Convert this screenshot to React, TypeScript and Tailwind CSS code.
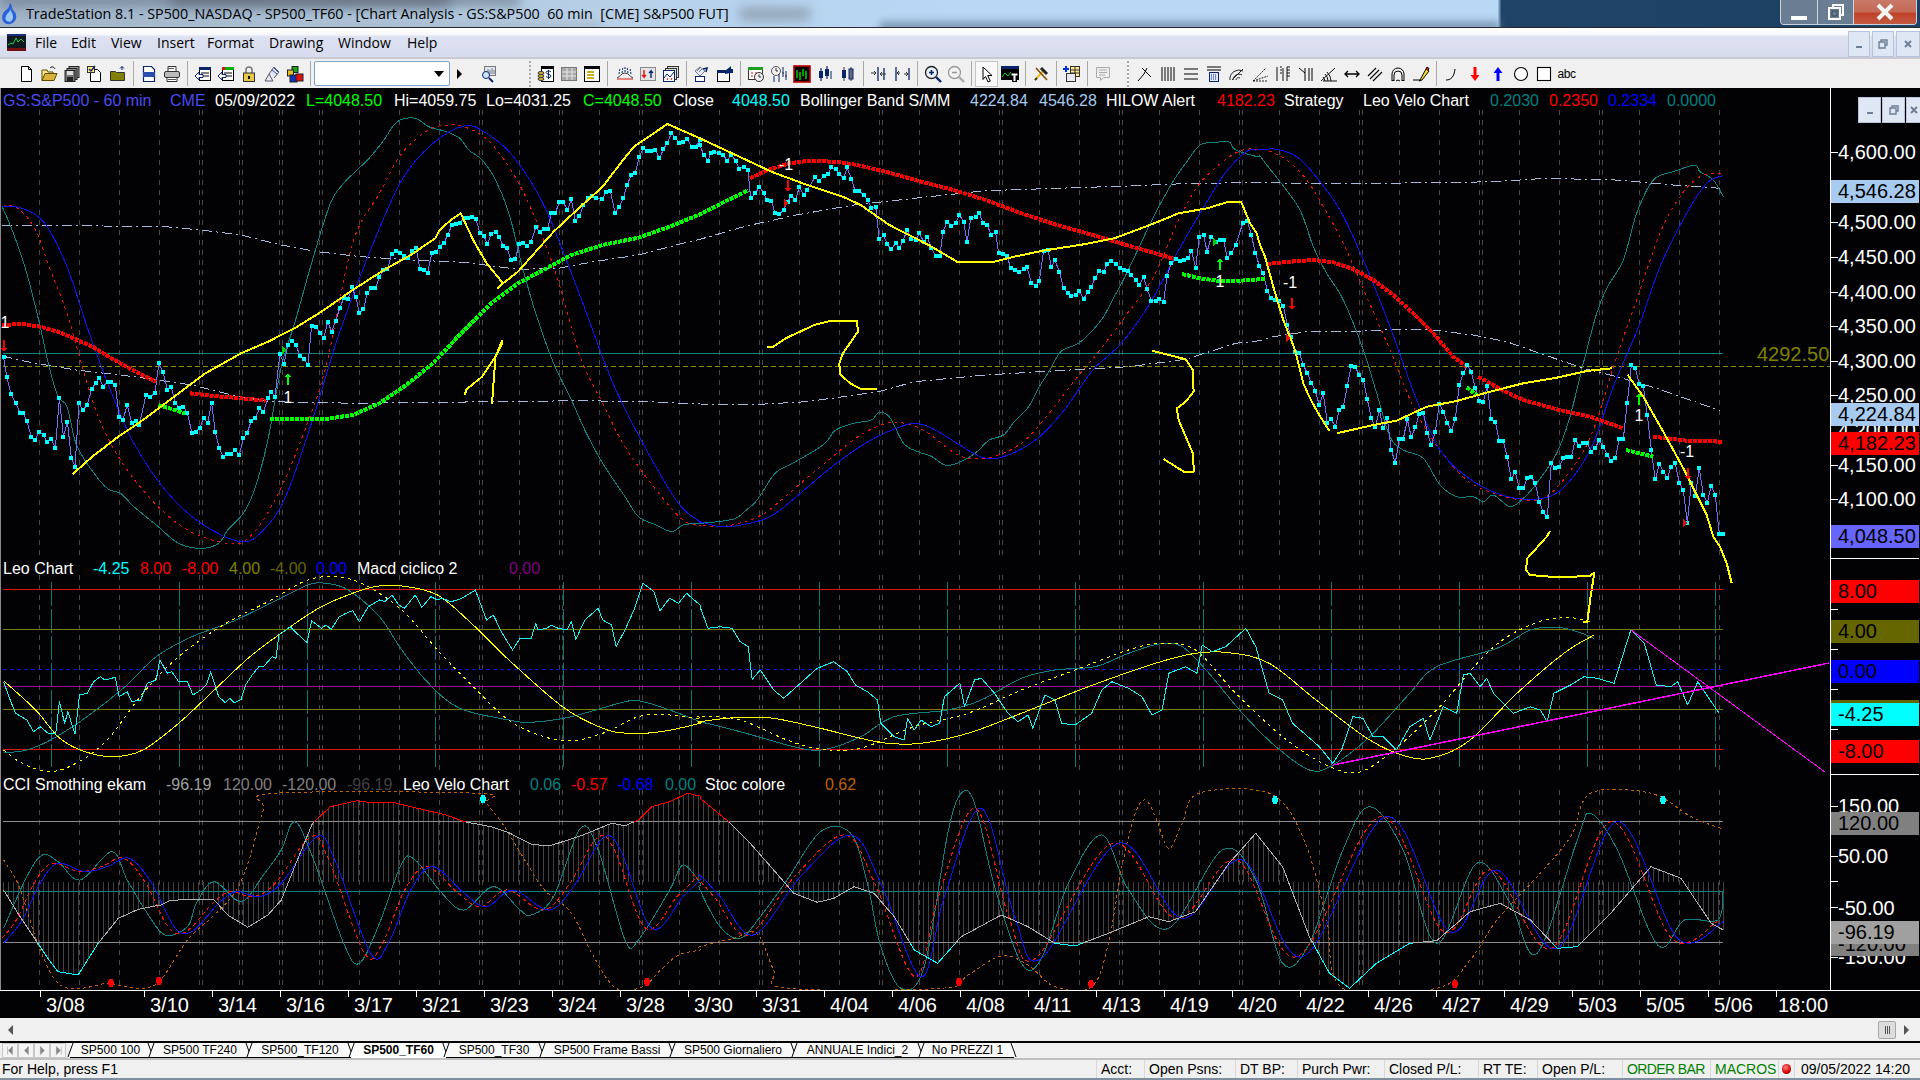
import React from "react";

type P = [number, number];
const Z = (ox: number, sx: number, oy: number) => (a: number[]): P[] => {
  const o: P[] = [];
  for (let i = 0; i < a.length; i += 2) o.push([ox + a[i] / sx, oy + a[i + 1] / 3]);
  return o;
};
const z8 = Z(0, 2.24, 100);
const z10 = Z(700, 2.8, 100);
const z11 = Z(1240, 3, 100);
const z9 = Z(0, 2.24, 550);
const z12 = Z(700, 1.4933, 550);
const join = (...parts: P[][]): P[] => {
  let out: P[] = [];
  parts.forEach((p) => {
    if (p.length === 0) return;
    out = out.filter((q) => q[0] < p[0][0]).concat(p);
  });
  return out;
};
const poly = (p: P[]) => p.map((q) => `${q[0].toFixed(1)},${q[1].toFixed(1)}`).join(" ");
const smooth = (p: P[]) => {
  let d = `M${p[0][0].toFixed(1)} ${p[0][1].toFixed(1)}`;
  for (let i = 0; i < p.length - 1; i++) {
    const a = p[Math.max(i - 1, 0)], b = p[i], c = p[i + 1], e = p[Math.min(i + 2, p.length - 1)];
    d += `C${(b[0] + (c[0] - a[0]) / 6).toFixed(1)} ${(b[1] + (c[1] - a[1]) / 6).toFixed(1)} ${(c[0] - (e[0] - b[0]) / 6).toFixed(1)} ${(c[1] - (e[1] - b[1]) / 6).toFixed(1)} ${c[0].toFixed(1)} ${c[1].toFixed(1)}`;
  }
  return d;
};
const at = (p: P[], x: number) => {
  for (let i = 0; i < p.length - 1; i++) {
    if (x >= p[i][0] && x <= p[i + 1][0]) {
      const t = (x - p[i][0]) / (p[i + 1][0] - p[i][0] || 1);
      return p[i][1] + t * (p[i + 1][1] - p[i][1]);
    }
  }
  return x < p[0][0] ? p[0][1] : p[p.length - 1][1];
};

// ---- price pane ----
const teal1 = join(
  z8([5,320,30,400,60,520,90,680,110,800,130,890,150,920,170,1030,200,1100,240,1165,270,1180,300,1220,350,1275,400,1330,450,1345,490,1330,510,1290,545,1240,570,1170,600,1020,630,800,660,670,700,480,740,310,770,250,800,210,830,170,860,120,890,65,930,55,960,80,1000,95,1030,115,1050,150,1080,180,1110,240,1140,340,1170,500,1200,640,1240,790,1280,900,1310,990,1350,1090,1400,1190,1430,1250,1470,1275,1505,1295,1530,1275,1568,1270]),
  z10([0,1270,50,1265,100,1255,130,1230,160,1200,210,1120,250,1095,300,1065,350,1030,380,990,430,970,480,960,500,938,530,950,570,1030,610,1055,650,1070,685,1095,720,1090,770,1060,810,1020,850,1005,880,965,920,920,950,860,980,810,1010,755,1060,730,1100,690,1130,650,1160,590,1190,530,1230,440,1270,350,1300,290,1330,235,1360,190,1400,135,1440,128,1480,125,1500,150,1560,170]),
  z11([60,168,80,195,120,245,180,330,220,440,260,520,310,600,370,750,410,880,450,1010,490,1050,550,1075,600,1155,650,1190,700,1190,730,1205,760,1185,810,1220,850,1195,890,1150,950,1060,990,950,1030,790,1070,640,1100,565,1150,480,1190,340,1240,240,1300,215,1365,195,1380,215,1420,240,1450,290])
);
const red1 = join(
  z8([5,318,40,325,80,390,110,500,150,640,180,780,220,950,270,1080,340,1200,420,1290,510,1330,560,1310,620,1190,680,1000,730,800,790,430,850,280,900,160,960,90,1000,76,1040,80,1100,130,1170,270,1240,500,1300,770,1350,910,1400,1040,1470,1170,1530,1260,1568,1275]),
  z10([0,1275,50,1280,110,1270,180,1240,260,1170,360,1080,450,1005,530,968,590,975,640,1000,700,1050,750,1075,820,1070,900,1030,970,950,1050,840,1120,750,1190,650,1270,530,1340,360,1400,250,1470,180,1520,150]),
  z11([60,148,80,150,140,180,200,240,250,320,310,430,380,590,450,750,520,920,600,1050,680,1140,760,1180,850,1200,920,1190,1000,1100,1060,990,1130,770,1190,600,1260,400,1320,290,1380,230,1445,220])
);
const blue1 = join(
  z8([5,320,50,325,100,370,150,500,200,700,250,880,300,1030,370,1170,450,1270,540,1325,590,1290,640,1190,700,960,760,700,830,450,900,240,970,130,1040,78,1090,100,1150,170,1220,320,1300,590,1370,840,1440,1030,1520,1210,1568,1265]),
  z10([0,1265,60,1280,130,1272,200,1248,270,1190,370,1100,470,1025,550,985,600,970,650,985,720,1030,790,1072,850,1070,940,1020,1020,930,1100,810,1180,730,1260,610,1330,470,1400,340,1470,220,1530,155]),
  z11([50,150,110,148,170,170,220,220,300,330,370,480,450,680,530,900,600,1050,680,1130,770,1180,860,1198,940,1185,1000,1130,1060,1030,1120,860,1200,670,1260,500,1340,340,1400,250,1448,227])
);
const bandUp = join(
  z8([5,375,100,375,230,378,370,380,450,390,540,405,630,435,710,455,810,470,920,480,1040,487,1160,508,1250,505,1330,485,1430,465,1530,430,1568,418]),
  z10([0,418,130,378,270,345,430,315,600,295,800,272,1000,265,1200,258,1380,250,1568,245]),
  z11([60,248,200,250,400,250,600,248,760,245,900,236,1100,238,1200,246,1300,255,1440,265])
);
const bandLo = join(
  z8([5,768,60,785,170,810,300,830,430,855,520,885,600,905,800,910,1100,905,1300,902,1450,905,1568,912]),
  z10([0,912,130,915,300,905,500,875,600,845,800,825,1000,812,1200,800,1360,778,1500,730]),
  z11([60,722,100,710,200,695,340,695,460,688,560,688,700,705,800,725,900,760,1030,805,1130,830,1250,865,1350,900,1440,932])
);
const close = join(
  z8([8,772,15,830,25,883,35,910,45,938,52,940,60,962,70,1010,78,1020,88,995,98,1005,105,1025,115,1018,124,1043,133,895,142,1010,151,965,160,1075,168,1100,177,910,186,930,195,915,205,868,214,850,222,833,231,860,241,845,249,845,258,855,267,950,275,960,285,915,295,968,304,962,312,975,327,885,337,890,347,880,356,790,365,815,375,870,384,862,393,910,402,925,411,920,420,940,430,1000,438,995,447,985,456,955,465,970,474,908,482,995,491,1045,500,1070,509,1062,518,1062,527,1050,536,1065,545,1015,554,998,563,962,572,955,581,925,590,935,600,895,608,875,616,890,627,762,636,792,645,735,654,722,663,735,672,768,681,778,690,795,698,678,707,680,716,698,725,715,734,665,743,695,752,662,761,625,770,595,779,598,788,562,797,590,805,640,814,628,823,578,832,565,841,565,850,530,859,510,868,508,877,463,886,453,895,458,905,468,914,475,923,452,932,445,941,508,950,510,958,518,967,460,976,455,985,440,994,430,1003,405,1012,375,1021,372,1030,370,1039,355,1048,355,1057,350,1066,358,1075,398,1084,408,1092,432,1100,402,1110,395,1118,410,1127,438,1136,445,1145,480,1154,478,1163,433,1172,430,1181,438,1190,425,1200,382,1209,395,1218,388,1227,386,1235,340,1244,338,1253,307,1262,307,1271,330,1280,298,1289,362,1298,347,1307,315,1316,293,1325,288,1334,293,1349,297,1358,276,1367,272,1378,340,1387,320,1396,295,1405,255,1414,226,1423,218,1432,170,1441,145,1450,152,1459,152,1468,150,1477,175,1486,148,1495,128,1504,100,1513,115,1522,130,1531,125,1540,118,1549,142,1558,142,1567,120]),
  z10([0,135,10,165,22,182,30,160,40,155,52,160,65,165,76,182,88,165,100,182,110,207,122,200,134,210,142,295,155,280,166,260,178,278,188,300,200,302,210,340,222,343,234,330,245,305,256,288,267,300,278,262,290,285,300,270,322,232,334,242,346,228,358,222,368,202,380,208,390,222,402,235,412,202,424,238,434,272,446,272,458,285,470,300,480,325,492,320,502,418,514,406,524,432,536,448,548,430,558,445,568,423,580,390,592,418,604,420,614,400,626,425,636,410,648,445,660,467,672,467,680,395,692,365,704,378,716,370,726,345,738,365,748,425,758,355,772,350,782,340,792,368,804,375,816,405,828,397,836,460,848,462,860,468,870,505,882,510,894,515,906,508,916,502,928,550,940,558,950,542,962,452,974,450,984,500,994,480,1006,515,1018,565,1030,578,1040,588,1052,585,1062,573,1074,597,1086,575,1096,560,1106,535,1118,513,1130,515,1140,493,1152,482,1164,492,1176,505,1186,510,1198,512,1208,525,1220,540,1230,555,1242,530,1252,568,1264,602,1276,603,1286,597,1298,605,1308,528,1320,490,1332,478,1344,482,1356,480,1366,475,1376,452,1388,503,1398,410,1410,405,1420,455,1432,410,1444,425,1456,420,1466,420,1476,473,1488,460,1500,435]),
  z11([8,370,22,362,34,405,46,458,58,497,70,520,82,572,94,595,106,600,118,602,130,618,142,675,154,712,166,756,178,758,190,795,202,820,214,848,226,873,238,915,250,880,262,968,274,958,286,980,298,930,310,920,322,858,334,797,346,802,358,825,370,840,382,897,394,955,406,982,418,930,430,985,442,955,454,1050,466,1088,478,1018,490,1017,502,958,514,1012,526,982,538,942,550,938,562,998,574,1035,586,995,598,912,610,935,622,968,634,992,646,958,658,856,670,820,682,796,694,815,706,865,718,903,730,905,742,857,754,958,766,965,778,1022,790,1023,802,1072,814,1137,826,1115,838,1165,850,1163,862,1135,874,1130,886,1150,898,1205,910,1237,922,1252,934,1088,946,1105,958,1102,970,1073,982,1070,994,1070,1006,1020,1018,1037,1030,1030,1042,1030,1054,1055,1066,1043,1078,1020,1090,1040,1102,1065,1114,1082,1126,1075,1138,1017,1150,1017,1162,908,1174,795,1186,803,1198,852,1210,857,1222,945,1234,1050,1246,1138,1258,1092,1270,1115,1282,1133,1294,1100,1306,1090,1318,1148,1330,1170,1342,1268,1354,1150,1366,1187,1378,1105,1390,1185,1402,1208,1414,1157,1426,1185,1438,1303,1450,1303])
);
const reds = [
  z8([5,675,50,672,90,680,130,695,170,718,210,742,250,775,290,805,320,825,350,845]),
  z8([425,880,480,888,540,895,595,902]),
  z10([140,235,190,210,250,190,300,183,380,185,440,195,520,215,620,245,720,273,800,300,900,340,1000,375,1100,405,1200,437,1330,477]),
  z11([82,492,150,485,220,480,280,487,340,508,400,540,460,585,520,640,580,700,640,770,680,800]),
  z11([715,830,790,872,850,900,950,928,1050,950,1150,985]),
  z11([1240,1010,1340,1022,1450,1025]),
];
const greens = [
  z8([355,915,415,940]),
  join(z8([605,957,730,957,790,945,850,910,910,855,970,790,1040,690,1100,610,1160,550,1210,515,1280,465,1350,435,1430,413,1500,380,1568,343]), z10([0,343,60,310,135,270])),
  join(z10([1350,522,1400,535,1450,542,1500,543]), z11([30,540,75,537])),
  z11([680,862,710,885]),
  z11([1158,1050,1240,1070]),
];
const yellows = [
  z8([163,1122,205,1072,260,1015,320,960,390,890,460,820,540,760,600,725,660,685,720,635,790,570,860,510,920,465,975,415,985,390,1010,360,1032,340,1060,420,1090,490,1127,550,1115,565,1127,550,1160,515,1240,395,1300,320,1350,260,1390,190,1420,140,1495,72,1568,115])
    .concat(z10([100,165,200,215,300,255,400,290,450,315,530,375,640,435,720,485,825,485,880,470,960,452,1080,432,1160,415,1260,375,1340,340,1420,325,1480,305,1515,305,1540,370]))
    .concat(z11([50,400,60,435,75,470,100,560,130,660,165,750,180,810,190,850,210,895,235,940,268,993])),
  z11([290,1000,400,975,470,962,560,920,650,903,750,875,850,850,950,833,1040,813,1115,805]),
  z11([1163,825,1210,890,1270,995,1330,1105,1400,1245,1420,1310,1440,1340,1460,1390,1475,1450]),
  z8([1041,885,1045,868,1080,830,1110,770,1125,722,1125,730,1110,770,1102,912]),
  z10([187,741,205,740,240,715,320,675,360,664,440,663,442,695,400,760,390,790,392,822,420,850,450,867,495,867]),
  z10([1265,752,1360,778,1380,810,1382,875,1360,905,1335,925,1340,960,1380,1060,1383,1115,1355,1115,1298,1077]),
  z11([930,1293,920,1310,862,1375,858,1410,870,1425,950,1432,1050,1428,1062,1418]).concat(z12([1335,75,1330,140,1325,215,1318,215])),
];

// ---- macd pane ----
const leo = join(
  z9([8,395,20,440,35,490,60,510,75,545,90,530,110,552,125,550,133,455,145,520,152,485,168,553,178,435,195,430,210,395,225,380,235,390,258,382,267,440,285,425,295,455,315,450,330,400,350,390,358,330,375,370,385,365,400,395,420,395,432,435,450,420,462,405,472,365,490,440,505,458,515,445,525,458,540,448,550,405,565,375,580,350,590,350,610,320,618,325,625,255,650,230,665,250,688,278,698,212,720,235,730,225,742,238,760,200,775,190,790,182,805,215,825,170,838,160,850,150,862,155,878,135,893,165,906,175,930,135,945,172,965,140,980,150,990,145,1010,155,1030,148,1040,140,1065,120,1080,175,1090,210,1105,195,1125,250,1148,300,1165,265,1190,265,1200,220,1205,240,1225,235,1235,225,1250,235,1270,240,1280,215,1290,268,1310,210,1340,175,1350,210,1370,225,1380,290,1400,240,1420,180,1440,100,1465,125,1478,183,1500,145,1520,160,1538,130,1568,165]),
  z12([0,170,12,235,30,230,48,235,60,275,72,290,78,388,90,360,110,420,125,445,150,400,175,355,200,335,220,365,232,405,250,425,265,450,270,520,290,560,305,570,310,505,320,540,330,510,345,530,358,520,365,440,388,400,395,470,410,390,420,385,440,430,460,490,475,515,490,495,497,535,515,435,530,450,540,520,560,525,585,490,600,420,615,395,640,415,660,440,675,495,690,480,700,370,725,350,742,370,750,285,765,305,785,290,815,235,830,290,850,430,870,450,885,520,925,590,945,640,958,600,975,500,990,505,1005,560,1020,560,1040,600,1060,530,1080,505,1090,570,1110,470,1130,490,1140,375,1150,370,1165,410,1175,385,1185,430,1215,490,1240,470,1255,480,1265,515,1275,430,1300,405,1320,380,1340,385,1365,400,1390,240,1410,280,1428,405,1450,410,1460,395,1475,465,1490,395,1510,455,1522,490])
);
const teal2 = join(
  z9([8,608,60,600,120,565,200,495,280,410,350,320,430,260,520,215,620,150,690,105,730,100,780,120,850,200,900,300,960,400,1030,475,1140,510,1190,517,1280,500,1400,455,1440,455,1500,480,1568,515]),
  z12([0,515,60,545,150,595,190,597,240,560,290,500,370,480,420,450,480,385,530,360,590,350,640,310,685,282,720,290,760,370,810,490,860,590,910,660,945,645,1000,560,1060,430,1100,350,1190,295,1240,240,1280,232,1310,245,1335,265])
);
const yel2 = join(
  z9([8,392,80,480,130,560,180,600,250,620,320,600,400,520,480,420,560,320,640,240,720,170,800,125,850,108,900,108,980,135,1060,225,1140,330,1260,470,1350,535,1410,550,1480,545,1568,520]),
  z12([0,515,60,502,110,505,180,535,240,565,280,580,330,580,400,550,480,490,580,410,680,340,740,310,790,308,850,340,920,450,1000,570,1060,622,1100,620,1150,570,1220,430,1290,310,1335,255])
);
const yelDot = join(
  z9([8,600,50,640,110,665,170,640,240,570,320,430,400,320,500,225,600,155,680,95,740,80,810,100,900,180,980,300,1060,410,1150,520,1260,572,1350,550,1430,500,1500,495,1568,505]),
  z12([0,498,60,510,130,570,180,597,240,595,320,530,400,490,480,420,560,360,640,300,690,280,740,300,800,430,870,560,930,640,980,668,1030,610,1100,480,1180,300,1240,225,1290,202,1330,215])
);

// ---- cci pane ----
const cci = join(
  z9([8,1020,40,1090,80,1170,110,1230,130,1265,175,1275,220,1180,265,1105,310,1078,360,1065,380,1052,420,1048,480,1050,510,1095,555,1132,600,1095,630,1050,660,950,700,820,740,770,800,752,830,758,880,757,920,770,1000,795,1040,815,1100,830,1140,848,1190,883,1230,888,1300,858,1370,820,1400,827,1430,810,1460,770,1500,755,1540,730,1568,738]),
  z12([0,745,40,810,75,880,110,960,140,1030,175,1057,200,1045,230,1010,260,1030,290,1100,320,1200,355,1240,390,1160,450,1095,490,1130,530,1180,560,1188,610,1150,670,1100,700,1115,740,1085,790,940,830,850,870,950,910,1160,940,1270,970,1315,1010,1240,1060,1180,1100,1172,1150,1085,1195,1060,1240,1110,1280,1195,1310,1190,1360,1090,1420,950,1465,985,1510,1120,1528,1140])
);
const stoc = join(
  z9([8,930,40,1000,60,1080,90,1200,130,1300,180,1315,240,1300,280,1310,320,1315,360,1290,420,1170,480,1095,530,1020,560,920,590,780,615,730,1070,730,1090,760,1130,830,1180,940,1220,1020,1280,1090,1330,1220,1380,1315,1440,1310,1480,1260,1520,1215,1568,1200]),
  z12([0,1190,50,1165,85,1150,110,1260,130,1315,360,1315,400,1275,450,1218,490,1245,530,1310,585,1310,610,1180,630,950,650,790,665,750,680,800,700,895,720,820,745,730,850,730,900,860,935,1100,960,1315,1100,1315,1150,1230,1190,1110,1250,980,1300,860,1330,730,1420,730,1480,800,1528,838])
);
const teal3 = join(
  z9([8,1135,60,980,95,915,130,935,180,990,250,905,285,990,330,1090,370,1155,420,1130,440,1060,480,995,540,1055,590,975,630,900,660,815,700,920,770,1180,805,1240,850,1120,900,940,930,930,990,1030,1040,1080,1105,1010,1165,1080,1190,1095,1240,1040,1300,835,1340,900,1400,1170,1430,1170,1500,1020,1530,945,1568,1000]),
  z12([0,1020,30,1130,60,1165,90,1100,130,990,180,845,225,850,250,1000,270,1190,300,1315,335,1250,370,850,390,730,410,760,440,1010,480,1240,510,1225,550,1000,600,855,640,1020,700,1135,780,900,830,990,870,1240,910,1180,960,900,1000,770,1050,900,1100,1180,1160,940,1210,1060,1250,1210,1310,870,1330,790,1370,900,1430,1185,1470,1110,1520,1110,1528,1020])
);
const blue3 = join(
  z9([8,1180,50,1110,90,1000,130,940,190,965,240,950,290,925,340,1000,390,1130,430,1145,490,1060,530,1025,580,1040,630,1000,710,860,750,930,830,1210,870,1180,920,1020,970,950,1040,1030,1090,1070,1150,1020,1230,1080,1290,1000,1350,865,1390,900,1460,1135,1530,1040,1568,990]),
  z12([0,975,30,1040,80,1155,150,980,225,855,270,1000,330,1280,365,1040,420,775,470,1100,510,1225,625,880,720,1105,810,930,900,1220,1025,800,1120,1145,1190,960,1280,1195,1370,815,1460,1165,1528,1115])
);

const gridXs = Array.from({ length: 43 }, (_, i) => 39 + i * 40);
const doubles = [199, 239, 279, 319, 479, 559, 639, 759, 879, 999, 1119, 1239, 1359, 1479, 1599];
const tealXs = Array.from({ length: 14 }, (_, i) => 51 + i * 128);
const bars = Array.from({ length: 345 }, (_, i) => 3 + i * 5);

type T = [string, string, number];
const legend1: T[] = [
  ["GS:S&P500 - 60 min", "#4a4af0", 3], ["CME", "#4a4af0", 170], ["05/09/2022", "#ffffff", 215], ["L=4048.50", "#00ff00", 306],
  ["Hi=4059.75", "#ffffff", 394], ["Lo=4031.25", "#ffffff", 486], ["C=4048.50", "#00ff00", 583], ["Close", "#ffffff", 673],
  ["4048.50", "#00ffff", 732], ["Bollinger Band S/MM", "#ffffff", 800], ["4224.84", "#a6caf0", 970], ["4546.28", "#a6caf0", 1039],
  ["HILOW Alert", "#ffffff", 1106], ["4182.23", "#ff0000", 1217], ["Strategy", "#ffffff", 1284], ["Leo Velo Chart", "#ffffff", 1363],
  ["0.2030", "#008080", 1490], ["0.2350", "#ff0000", 1549], ["0.2334", "#0000ff", 1608], ["0.0000", "#008080", 1667],
];
const legend2: T[] = [
  ["Leo Chart", "#ffffff", 3], ["-4.25", "#00ffff", 93], ["8.00", "#ff0000", 140], ["-8.00", "#ff0000", 182], ["4.00", "#808000", 229],
  ["-4.00", "#666600", 270], ["0.00", "#0000ff", 316], ["Macd ciclico 2", "#ffffff", 357], ["0.00", "#800080", 509],
];
const legend3: T[] = [
  ["CCI Smothing ekam", "#ffffff", 3], ["-96.19", "#a0a0a0", 166], ["120.00", "#808080", 223], ["-120.00", "#808080", 282],
  ["-96.19", "#404040", 347], ["Leo Velo Chart", "#ffffff", 403], ["0.06", "#008080", 530], ["-0.57", "#ff0000", 571],
  ["-0.68", "#0000ff", 617], ["0.00", "#008080", 665], ["Stoc colore", "#ffffff", 705], ["0.62", "#c06000", 825],
];
const marks: T[] = [["1", "#ffffff", 5], ["1", "#ffffff", 288], ["-1", "#ffffff", 786], ["1", "#ffffff", 1220], ["-1", "#ffffff", 1290], ["1", "#ffffff", 1639], ["-1", "#ffffff", 1687]];
const markY = [328, 403, 170, 287, 288, 421, 457];
const arrows: [number, number, string, number][] = [
  [288, 373, "#00ff00", -1], [4, 340, "#ff0000", 1], [788, 180, "#ff0000", 1], [1220, 258, "#00ff00", -1],
  [1292, 298, "#ff0000", 1], [1639, 393, "#00ff00", -1], [1688, 468, "#ff0000", 1],
];

function Chart() {
  const line = (p: P[], color: string, w = 1, dash?: string, k?: string) => (
    <polyline key={k} points={poly(p)} fill="none" stroke={color} strokeWidth={w} strokeDasharray={dash} strokeLinejoin="round" />
  );
  const curve = (p: P[], color: string, w = 1, dash?: string) => (
    <path d={smooth(p)} fill="none" stroke={color} strokeWidth={w} strokeDasharray={dash} />
  );
  const hl = (y: number, c: string, x2 = 1723, dash?: string, w = 1) => (
    <line x1={3} x2={x2} y1={y} y2={y} stroke={c} strokeWidth={w} strokeDasharray={dash} />
  );
  const grid = (x: number) => (
    <g key={x} stroke="#484848" strokeDasharray="5 5">
      <line x1={x + 0.5} x2={x + 0.5} y1={110} y2={555} />
      <line x1={x + 0.5} x2={x + 0.5} y1={575} y2={770} />
      <line x1={x + 0.5} x2={x + 0.5} y1={790} y2={987} />
    </g>
  );
  return (
    <svg viewBox="0 88 1830 902" shapeRendering="crispEdges" className="block w-[1830px] h-[902px] shrink-0 font-['Liberation_Sans',Arial,sans-serif]">
      <defs>
        <clipPath id="hi"><rect x="0" y="700" width="1830" height="122" /></clipPath>
        <clipPath id="lo"><rect x="0" y="943" width="1830" height="60" /></clipPath>
      </defs>
      <line x1="0.5" x2="0.5" y1="88" y2="990" stroke="#8a8a8a" />
      {gridXs.map((x) => grid(x))}
      {doubles.map((x) => grid(x + 3))}
      {tealXs.map((x) => (
        <line key={x} x1={x + 0.5} x2={x + 0.5} y1={582} y2={767} stroke="#0f7878" strokeDasharray="24 3" />
      ))}

      {/* price pane */}
      {hl(353.5, "#108080")}
      {hl(366.5, "#8c8c00", 1830, "5 3")}
      {line(bandUp, "#a6bcdc", 1, "10 4 2 4")}
      {line(bandLo, "#a6bcdc", 1, "10 4 2 4")}
      {curve(teal1, "#0f8080")}
      {curve(red1, "#f01010", 1, "3 4")}
      {curve(blue1, "#1010f0")}
      {line(close, "#7070f0")}
      {reds.map((p, i) => line(p, "#ff0000", 4, "4 1", "r" + i))}
      {greens.map((p, i) => line(p, "#00ff00", 4, "4 1", "g" + i))}
      <path d={close.map((q) => `M${Math.round(q[0] - 2)} ${Math.round(q[1] - 2)}h4v4h-4z`).join("")} fill="#00ffff" />
      {yellows.map((p, i) => line(p, "#ffff00", 2, undefined, "y" + i))}
      {arrows.map(([x, y, c, d], i) => (
        <path
          key={i}
          d={d > 0 ? `M${x - 1} ${y}h2v8h2l-3 4l-3-4h2z` : `M${x - 1} ${y + 12}h2v-8h2l-3-4l-3 4h2z`}
          fill={c}
        />
      ))}
      <path d="M282 346l5 4l-5 4zM1213 238l5 4l-5 4z" fill="#00d000" />
      <path d="M784 199l5 4l-5 4zM1286 334l5 4l-5 4zM1683 519l5 4l-5 4z" fill="#e01010" />
      {marks.map(([s, c, x], i) => (
        <text key={i} x={x} y={markY[i]} fill={c} fontSize={16} textAnchor="middle">{s}</text>
      ))}
      <text x={1757} y={361} fill="#808000" fontSize={20}>4292.50</text>

      {/* macd pane */}
      {hl(589.5, "#e01010")}
      {hl(629.5, "#7a7a00")}
      {hl(669.5, "#1414d8", 1723, "4 3")}
      {hl(686.5, "#a000a0")}
      {hl(709.5, "#7a7a00")}
      {hl(749.5, "#e01010")}
      {curve(teal2, "#0f8080")}
      {curve(yelDot, "#ffff00", 1, "3 4")}
      {curve(yel2, "#ffff00")}
      {line(leo, "#19f0f0")}
      <line x1="1333" y1="765" x2="1829" y2="663" stroke="#ff00ff" strokeWidth="1.5" />
      <line x1="1631" y1="630" x2="1825" y2="772" stroke="#ff00ff" />

      {/* cci pane */}
      {bars.map((x) => (
        <line key={x} x1={x + 0.5} x2={x + 0.5} y1={881.5} y2={at(cci, x)} stroke="#424242" />
      ))}
      {hl(821.5, "#8c8c8c")}
      {hl(942.5, "#8c8c8c")}
      {hl(891.5, "#108080")}
      {curve(teal3, "#0f8080")}
      {curve(stoc, "#c06000", 1, "3 3")}
      <g transform="translate(-6 0)">{curve(blue3, "#ff1010", 1, "4 3")}</g>
      {curve(blue3, "#1010f0")}
      {line(cci, "#b0b0b0")}
      <g clipPath="url(#hi)">{line(cci, "#ff0000", 1)}</g>
      <g clipPath="url(#lo)">{line(cci, "#00ffff", 1)}</g>
      <g fill="#ff0000">
        {[[111, 983], [159, 981], [647, 982], [959, 982], [1091, 984], [1455, 984]].map(([x, y]) => (
          <ellipse key={x} cx={x} cy={y} rx={3} ry={4} />
        ))}
      </g>
      <g fill="#00ffff">
        {[[483, 799], [1275, 800], [1663, 800]].map(([x, y]) => (
          <ellipse key={x} cx={x} cy={y} rx={3} ry={4} />
        ))}
      </g>

      {[legend1.map((t) => [...t, 106]), legend2.map((t) => [...t, 574]), legend3.map((t) => [...t, 790])].map((row, r) =>
        row.map((t, i) => (
          <text key={r + "-" + i} x={t[2] as number} y={t[3] as number} fill={t[1] as string} fontSize={16}>
            {t[0]}
          </text>
        ))
      )}
    </svg>
  );
}

const axisLabels: { y: number; t: string; bg?: string }[] = [
  { y: 152, t: "4,600.00" }, { y: 191, t: "4,546.28", bg: "#a6caf0" }, { y: 222, t: "4,500.00" }, { y: 257, t: "4,450.00" },
  { y: 292, t: "4,400.00" }, { y: 326, t: "4,350.00" }, { y: 361, t: "4,300.00" }, { y: 395, t: "4,250.00" },
  { y: 430, t: "4,200.00" }, { y: 414, t: "4,224.84", bg: "#a6caf0" }, { y: 443, t: "4,182.23", bg: "#ff0000" },
  { y: 465, t: "4,150.00" }, { y: 499, t: "4,100.00" }, { y: 536, t: "4,048.50", bg: "#6666ff" },
  { y: 591, t: "8.00", bg: "#ff0000" }, { y: 631, t: "4.00", bg: "#666600" }, { y: 671, t: "0.00", bg: "#0000ff" },
  { y: 711.5, t: "", bg: "#666600" }, { y: 714, t: "-4.25", bg: "#00ffff" }, { y: 751, t: "-8.00", bg: "#ff0000" },
  { y: 806, t: "150.00" }, { y: 823, t: "120.00", bg: "#808080" }, { y: 856, t: "50.00" }, { y: 908, t: "-50.00" },
  { y: 957, t: "-150.00" }, { y: 944, t: "-120.00", bg: "#808080" }, { y: 932, t: "-96.19", bg: "#a0a0a0" },
];
const axisTicks = [152, 222, 257, 292, 326, 361, 395, 465, 499, 609, 649, 689, 729, 806, 856, 881, 907, 957];

function Axis() {
  return (
    <div className="relative w-[90px] h-[902px] shrink-0 border-l border-white bg-[#020204] overflow-hidden font-['Liberation_Sans',Arial,sans-serif]">
      {axisTicks.map((y) => (
        <div key={y} className="absolute left-0 w-[7px] h-px bg-white" style={{ top: y - 88 }} />
      ))}
      {axisLabels.map((l, i) => (
        <div
          key={i}
          className={`absolute left-0 h-[23px] w-[88px] pl-[7px] text-[20px] leading-[23px] ${l.bg ? "text-black" : "text-white"}`}
          style={{ top: l.y - 88 - 11.5, background: l.bg }}
        >
          {l.t}
        </div>
      ))}
      <div className="absolute left-0 top-[470px] w-[88px] h-px bg-white" />
      <div className="absolute left-0 top-[686px] w-[88px] h-px bg-white" />
      <div className="absolute left-[27px] top-[9px] flex gap-px">
        <WinBtn kind="min" w="w-[23px]" />
        <WinBtn kind="max" w="w-[23px]" />
        <WinBtn kind="close" w="w-[15px]" />
      </div>
    </div>
  );
}

function WinBtn({ kind, w }: { kind: string; w: string }) {
  return (
    <div className={`${w} h-[26px] border border-[#b4c4da] bg-[#dfe7f5] flex items-center justify-center overflow-hidden`}>
      <svg viewBox="0 0 12 12" className="w-[12px] h-[12px] shrink-0" fill="none" stroke="#6f7f95" strokeWidth="1.4">
        {kind === "min" && <path d="M3 9h6" strokeWidth="2" />}
        {kind === "max" && <path d="M4 4V2h6v5H8M2 4h6v6H2z" />}
        {kind === "close" && <path d="M3 3l6 6M9 3l-6 6" strokeWidth="2" />}
      </svg>
    </div>
  );
}

// ---- toolbar icons ----
const Ic = ({ children }: { children: React.ReactNode }) => (
  <div className="w-[23px] h-[24px] flex items-center justify-center shrink-0">
    <svg viewBox="0 0 18 18" className="w-[18px] h-[18px]" fill="none" stroke="#000" strokeWidth="1">
      {children}
    </svg>
  </div>
);
const Sep = () => (
  <div className="w-[8px] flex justify-center shrink-0">
    <div className="w-px h-[25px] bg-[#a8a8a8]" />
  </div>
);
const Grip = ({ cls }: { cls: string }) => (
  <div className={`w-[8px] h-[26px] shrink-0 flex justify-center ${cls}`}>
    <div className="w-[2px] h-full border-l-2 border-dotted border-[#a8a8a8]" />
  </div>
);
const Lines = ({ y, w = 14 }: { y: number[]; w?: number }) => (
  <path d={y.map((v) => `M2 ${v}h${w}`).join("")} stroke="#000" />
);
const Win = ({ top = "#0a246a" }: { top?: string }) => (
  <>
    <rect x="5.5" y="2.5" width="11" height="13" fill="#fff" stroke="#000" />
    <rect x="5" y="2" width="12" height="3" fill={top} stroke="none" />
    <path d="M7 8h8M7 11h8" stroke="#000" />
    <path d="M1 11l4-4v2.5h4v3H5V15z" fill="#fff" stroke="#0a246a" />
  </>
);

function Toolbar() {
  return (
    <div className="h-[31px] bg-[#f0f0f0] flex items-center pl-[14px] border-t-2 border-[#c9c9cf] shrink-0">
      <Ic><path d="M4.5 1.5h7l3 3v12h-10z" fill="#fff" /><path d="M11.5 1.5v3h3" /></Ic>
      <Ic><path d="M2 15.5V5h5l1 2h5v2" fill="#ffe88c" stroke="#5c4a00" /><path d="M2 15.5l3-7h12l-3 7z" fill="#d9b23a" stroke="#5c4a00" /><path d="M10 3c2-2 4-1 5 1" stroke="#000" /></Ic>
      <Ic><rect x="6" y="1.5" width="10" height="11" fill="#999" stroke="#222" /><rect x="4" y="3.5" width="10" height="11" fill="#888" stroke="#222" /><rect x="2" y="5.5" width="10" height="11" fill="#777" stroke="#222" /><rect x="4" y="6" width="6" height="4" fill="#ddd" stroke="none" /><rect x="4" y="12" width="6" height="4" fill="#222" stroke="none" /></Ic>
      <Ic><path d="M4.5 4.5h7l3 3v9h-10z" fill="#fff" /><rect x="1.5" y="1.5" width="7" height="6" fill="#ffe88c" stroke="#333" /><path d="M3 4l2 2 4-5" stroke="#0a246a" strokeWidth="1.4" /></Ic>
      <Ic><path d="M1.5 15.5V6.5h5l1 1h8v8z" fill="#808000" stroke="#333" /><path d="M13 5V1.5M13 1.5l-2 2M13 1.5l2 2" stroke="#0a246a" /></Ic>
      <Sep />
      <Ic><path d="M3.5 1.5h8l3 3v12h-11z" fill="#fff" stroke="#0a246a" strokeWidth="1.2" /><rect x="3" y="7" width="12" height="5" fill="#2a4fb0" stroke="none" /></Ic>
      <Ic><path d="M5 6V1.5h8V6" fill="#fff" stroke="#333" /><rect x="1.5" y="6.5" width="15" height="6" rx="1.5" fill="#bbb" stroke="#333" /><path d="M4 12.5h10v4H4z" fill="#fff" stroke="#333" /><path d="M5 3.5h6M5 14.5h8" stroke="#555" /></Ic>
      <Sep />
      <Ic><Win /></Ic>
      <Ic><Win top="#00b000" /><rect x="5" y="2" width="3" height="3" fill="#e01010" stroke="none" /></Ic>
      <Ic><path d="M6 8V5a3 3 0 0 1 6 0v3" stroke="#777" strokeWidth="1.5" /><rect x="3.5" y="8" width="11" height="8.5" fill="#e6c84a" stroke="#333" /><path d="M9 11v3" stroke="#000" strokeWidth="2" /></Ic>
      <Ic><path d="M2 16l4-7 4 7zM6 9l5-7 5 5-5 6" fill="#e8e8f4" stroke="#556" /><path d="M9 5l5 4M11 3l4 4" stroke="#2a4fb0" /></Ic>
      <Ic><rect x="6" y="1.5" width="6" height="6" fill="#1aa01a" stroke="#222" /><rect x="1.5" y="5" width="6" height="6" fill="#e0c020" stroke="#222" /><rect x="4" y="10" width="7" height="7" fill="#1030c0" stroke="#222" /><rect x="10" y="9" width="7" height="7" fill="#e01010" stroke="#222" /></Ic>
      <Sep />
      <div className="w-[136px] h-[25px] bg-white border border-[#7fa4cf] rounded-[2px] flex items-center justify-end pr-[5px] shrink-0">
        <div className="w-0 h-0 border-l-[5px] border-r-[5px] border-t-[6px] border-l-transparent border-r-transparent border-t-black" />
      </div>
      <div className="w-[18px] flex justify-center shrink-0">
        <div className="w-0 h-0 border-t-[5px] border-b-[5px] border-l-[5px] border-t-transparent border-b-transparent border-l-black" />
      </div>
      <div className="ml-[8px]">
        <Ic><rect x="5.5" y="1.5" width="11" height="9" fill="#dfe6f0" stroke="#777" /><path d="M7 6v3M9 4v5M11 5v4M13 3v6M15 5v4" stroke="#778" /><circle cx="7" cy="10" r="3.5" fill="#cfe4ff" stroke="#0a246a" /><path d="M10 13l4 4" stroke="#0a246a" strokeWidth="2" /></Ic>
      </div>
      <Grip cls="ml-[27px]" />
      <Ic><rect x="4.5" y="1.5" width="12" height="15" fill="#fff" /><rect x="4" y="1" width="13" height="3" fill="#000" stroke="none" /><path d="M14 7c-1-1.500-5-1.500-5 .5s5 1.500 5 3.500-4 2-5 .5M11.500 5v9" stroke="#0a246a" /><ellipse cx="4" cy="8" rx="3" ry="1.5" fill="#d9b23a" stroke="#333" /><ellipse cx="4" cy="11" rx="3" ry="1.5" fill="#d9b23a" stroke="#333" /><ellipse cx="4" cy="14" rx="3" ry="1.5" fill="#d9b23a" stroke="#333" /></Ic>
      <Ic><rect x="1.5" y="2.5" width="15" height="13" fill="#a8a8a8" stroke="#777" /><path d="M2 7h14M2 11h14M7 3v12M12 3v12" stroke="#e8e8e8" /></Ic>
      <Ic><rect x="1.5" y="1.5" width="15" height="15" fill="#fff" /><rect x="1" y="1" width="16" height="3" fill="#000" stroke="none" /><rect x="4" y="6" width="7" height="2" fill="#c8b020" stroke="none" /><rect x="4" y="9" width="7" height="2" fill="#c8b020" stroke="none" /><rect x="4" y="12" width="7" height="2" fill="#c8b020" stroke="none" /></Ic>
      <Sep />
      <div className="ml-[2px]" />
      <Ic><path d="M1 13c3-1 4-5 8-5s5 4 8 5" stroke="#333" /><path d="M3 9l1-6M6 8l1-6M9 7V2M12 8l-1-6M15 9l-1-6" stroke="#0a246a" strokeDasharray="2 1" /><path d="M1 14h16" stroke="#e01010" /></Ic>
      <Ic><rect x="1.5" y="2.5" width="15" height="13" fill="#e4e4e4" stroke="#888" /><path d="M5 5v7l-2-2M5 12l2-2" stroke="#e01010" strokeWidth="1.4" /><path d="M12 13V6l-2 2M12 6l2 2" stroke="#0a246a" strokeWidth="1.4" /></Ic>
      <Ic><rect x="5.5" y="1.5" width="11" height="11" fill="#ddd" stroke="#333" /><rect x="3.5" y="3.5" width="11" height="11" fill="#ddd" stroke="#333" /><rect x="1.5" y="5.5" width="11" height="11" fill="#fff" stroke="#0a246a" /><path d="M2 13l3-4 3 3 4-5" stroke="#0a246a" /><path d="M5 15l1-2M9 15l1-2" stroke="#e01010" /></Ic>
      <Sep />
      <Ic><path d="M2 6l5-4 5 4-5 5z" fill="#e4e8f4" stroke="#778" /><path d="M4 6l3-3M6 7l3-3" stroke="#778" /><path d="M10 4l4-1-1 4" stroke="#0a246a" strokeWidth="1.6" /><rect x="2.5" y="11.5" width="9" height="5" fill="#fff" stroke="#0a246a" /></Ic>
      <Ic><rect x="1.5" y="5.5" width="12" height="11" fill="#fff" stroke="#000" /><rect x="1" y="5" width="13" height="3" fill="#0a246a" stroke="none" /><path d="M9 6l6-5v3h2v4h-3l-5 1z" fill="#0a246a" stroke="none" /></Ic>
      <Sep />
      <Ic><rect x="1.5" y="2.5" width="14" height="12" fill="#fff" stroke="#333" /><rect x="1" y="2" width="15" height="3" fill="#1aa01a" stroke="none" /><path d="M4 8h2M8 8h2M4 11h2" stroke="#e01010" /><circle cx="12" cy="12" r="4.5" fill="#eee" stroke="#333" /><path d="M12 9.5V12h2" stroke="#333" /></Ic>
      <Ic><circle cx="6" cy="6" r="4.5" fill="#f0f0f0" stroke="#555" /><path d="M6 3v3h2" stroke="#333" /><path d="M4 11v6M9 9v8M13 2v10M16 6v9" stroke="#0a246a" /><path d="M12 8h2M15 11h2" stroke="#333" /></Ic>
      <Ic><rect x="1" y="1" width="16" height="16" fill="#000" stroke="#c00000" strokeWidth="1.6" /><path d="M4 5v8M7 7v8M10 4v7M13 6v8" stroke="#00e000" strokeWidth="1.4" /></Ic>
      <Ic><path d="M5 3v13M11 1v13" stroke="#0a246a" strokeWidth="1.2" /><rect x="3" y="6" width="4" height="7" fill="#0a246a" stroke="none" /><rect x="9" y="4" width="4" height="7" fill="#0a246a" stroke="none" /><path d="M15 14V6" stroke="#0a246a" /></Ic>
      <Ic><path d="M5 2v14M12 2v14" stroke="#333" /><rect x="3" y="5" width="4" height="8" fill="#0a246a" stroke="none" /><rect x="10" y="4" width="4" height="10" fill="#667" stroke="#0a246a" /></Ic>
      <Sep />
      <Ic><path d="M8 2v14M14 3v12" stroke="#0a246a" strokeWidth="1.3" /><path d="M1 8h5M4 6l2 2-2 2M16 9h-6M12 7l-2 2 2 2" stroke="#333" /></Ic>
      <Ic><path d="M3 2v14M16 3v12" stroke="#0a246a" strokeWidth="1.3" /><path d="M4 8h3M6 6l-2 2 2 2M15 9h-4M13 7l2 2-2 2" stroke="#333" /></Ic>
      <Sep />
      <Ic><circle cx="7.5" cy="7.5" r="6" fill="#e8f2ff" stroke="#222" strokeWidth="1.3" /><path d="M5 7.5h5M7.5 5v5" stroke="#0a246a" strokeWidth="1.6" /><path d="M12 12l5 5" stroke="#0a246a" strokeWidth="2.4" /></Ic>
      <Ic><circle cx="7.5" cy="7.5" r="6" fill="#f2f2f2" stroke="#999" strokeWidth="1.3" /><path d="M5 7.5h5" stroke="#999" strokeWidth="1.6" /><path d="M12 12l5 5" stroke="#aaa" strokeWidth="2.4" /></Ic>
      <Sep />
      <div className="w-[23px] h-[26px] bg-[#f9f9f9] border border-[#c4c4c4] flex items-center justify-center shrink-0">
        <svg viewBox="0 0 18 18" className="w-[18px] h-[18px]"><path d="M5 2l9 8.5H9.7l2.6 5.5-2.2 1-2.6-5.5L5 14.500z" fill="#fff" stroke="#000" /></svg>
      </div>
      <Ic><rect x="0" y="1" width="18" height="14" fill="#000" stroke="none" /><rect x="0" y="1" width="18" height="3" fill="#0a246a" stroke="none" /><path d="M1 12l3-4 3 3 3-4" stroke="#00e000" /><path d="M10 9h7M13.5 9v8" stroke="#000" strokeWidth="5" /><path d="M10.5 9.5h6M13.5 9.5V16" stroke="#fff" strokeWidth="2" /></Ic>
      <Sep />
      <Ic><path d="M3 15L12 5" stroke="#e8c020" strokeWidth="2" /><path d="M9 3l6 6" stroke="#222" strokeWidth="3" /><path d="M4 3l11 12" stroke="#8a4a00" strokeWidth="1.6" /><path d="M3 15l2-2" stroke="#333" strokeWidth="2" /></Ic>
      <Sep />
      <Ic><rect x="7.5" y="1.5" width="9" height="10" fill="#ffe88c" stroke="#333" /><path d="M8 5h8M8 8h8M12 2v9" stroke="#333" /><rect x="3.5" y="8.5" width="9" height="8" fill="#e8e8f4" stroke="#333" /><path d="M3 1v6M0 4h6" stroke="#0030d0" strokeWidth="2" /></Ic>
      <Sep />
      <Ic><path d="M2.5 2.5h13v10h-6l-3 3v-3h-4z" fill="#efefef" stroke="#aaa" /><path d="M5 5h8M5 7.5h8M5 10h6" stroke="#aaa" /></Ic>
      <Grip cls="ml-[10px]" />
      <div className="ml-px" />
      <Ic><path d="M2 16l6-7M8 5l7 7M6 3l5 5M11 3L8 9" stroke="#000" /></Ic>
      <Ic><path d="M3 2v14M6 2v14M9 2v14M12 2v14M15 2v14" /></Ic>
      <Ic><Lines y={[4, 9, 14]} /></Ic>
      <Ic><path d="M2 2h14M2 5h14" stroke="#000" /><rect x="4.5" y="7.5" width="9" height="9" fill="#dfe8f8" stroke="#0a246a" /><path d="M6 10h6M6 12h6M6 14h6" stroke="#0a246a" strokeDasharray="1 1" /></Ic>
      <Ic><path d="M2 15a9 9 0 0 1 13-9M5 15a6 6 0 0 1 9-5M8 15a3 3 0 0 1 4-2M4 15L15 4" stroke="#222" /></Ic>
      <Ic><path d="M2 16L15 3M2 16l15-5M2 16h15" stroke="#222" strokeDasharray="2 1" /></Ic>
      <Ic><path d="M6 2h2M6 5h2M6 8h2M3 2v14M9 3v13M13 2h3M13 5h3M13 8h3M13 11h3M13 2v14" stroke="#111" /></Ic>
      <Ic><path d="M2 3l6 5M8 3v13M12 3v13M15 3v13" stroke="#000" /></Ic>
      <Ic><path d="M1 16L15 3M3 16h14M5 16a8 8 0 0 0-2-4M8 16a10 10 0 0 0-3-7M11 16a13 13 0 0 0-4-9" stroke="#111" /></Ic>
      <Ic><path d="M2 9h14M5 6L2 9l3 3M13 6l3 3-3 3" strokeWidth="1.3" /></Ic>
      <Ic><path d="M2 11l8-8M4 14l9-9M7 16l9-9" strokeWidth="1.1" /></Ic>
      <Ic><path d="M3 16V9a6 6 0 0 1 12 0v7M5 16v-6a4 4 0 0 1 8 0v6M3 16q1.5-2 2 0M7 16q2-2 4 0M13 16q1-2 2 0" strokeWidth="1" /></Ic>
      <Ic><path d="M1 15h7" /><path d="M8 15L14 4l3 2-7 9-3 1z" fill="#ffe020" stroke="#000" /><path d="M14 4l1-2 2 1.5-1 2" fill="#e01010" stroke="#000" /></Ic>
      <Sep />
      <Ic><path d="M3 15c5 0 8-3 9-11" /></Ic>
      <Ic><path d="M7.5 2h3v8h3L9 16 4.500 10h3z" fill="#ff0000" stroke="none" /></Ic>
      <Ic><path d="M7.500 16h3V8h3L9 2 4.500 8h3z" fill="#0000ff" stroke="none" /></Ic>
      <Ic><circle cx="9" cy="9" r="6.500" fill="#fff" strokeWidth="1.1" /></Ic>
      <Ic><rect x="2.500" y="2.500" width="13" height="13" fill="#fff" strokeWidth="1.1" /></Ic>
      <div className="w-[23px] text-center text-[12px] text-black shrink-0 tracking-[-0.5px]">abc</div>
    </div>
  );
}

const tabs: [string, string][] = [
  ["SP500 100", "w-[81px]"], ["SP500 TF240", "w-[98px]"], ["SP500_TF120", "w-[102px]"], ["SP500_TF60", "w-[95px]"], ["SP500_TF30", "w-[96px]"],
  ["SP500 Frame Bassi", "w-[130px]"], ["SP500 Giornaliero", "w-[122px]"], ["ANNUALE Indici_2", "w-[127px]"], ["No PREZZI 1", "w-[93px]"],
];
const ticksLabels = ["3/10","3/14","3/16","3/17","3/21","3/23","3/24","3/28","3/30","3/31","4/04","4/06","4/08","4/11","4/13","4/19","4/20","4/22","4/26","4/27","4/29","5/03","5/05","5/06"];
const statusCells: [string, string, string][] = [
  ["Acct:", "w-[48px]", "text-black"], ["Open Psns:", "w-[91px]", "text-black"], ["DT BP:", "w-[62px]", "text-black"], ["Purch Pwr:", "w-[87px]", "text-black"],
  ["Closed P/L:", "w-[94px]", "text-black"], ["RT TE:", "w-[59px]", "text-black"], ["Open P/L:", "w-[85px]", "text-black"], ["ORDER BAR", "w-[88px] tracking-[-0.6px]", "text-[#008000]"], ["MACROS", "w-[68px]", "text-[#008000]"],
];

export default function App() {
  return (
    <div className="w-[1920px] h-[1080px] overflow-hidden flex flex-col bg-[#f0f0f0] font-['Liberation_Sans',Arial,sans-serif]">
      {/* title bar */}
      <div className="relative h-[28px] shrink-0 overflow-hidden flex items-center justify-between border-b border-[#2a2a2e] bg-[linear-gradient(90deg,#9db1c6_0,#a9c0d6_12%,#b6cfe6_30%,#b9d8f6_50%,#b9d8f6_78%,#1f4468_78.2%,#1d4062_100%)]">
        <div className="absolute left-0 top-[-8px] w-[520px] h-[14px] bg-[#6b7888] blur-[6px] opacity-70" />
        <div className="absolute left-[170px] top-[-10px] w-[280px] h-[16px] bg-[#56606e] blur-[7px] opacity-70" />
        <div className="absolute left-[740px] top-[8px] w-[70px] h-[12px] bg-[#7e8a98] blur-[6px] opacity-70" />
        <div className="absolute left-[880px] top-[22px] w-[620px] h-[10px] bg-[#64809c] blur-[4px] opacity-80" />
        <div className="absolute left-0 top-[22px] w-[600px] h-[10px] bg-[#a8b8c8] blur-[4px] opacity-80" />
        <div className="relative flex items-center">
          <svg viewBox="0 0 18 24" className="w-[18px] h-[24px] ml-px">
            <path d="M9 1c3 3 1 5 4 8s3 8 0 11-9 3-11-1 0-9 3-11 3-4 4-7z" fill="#2a62d8" />
            <path d="M9 7c1 3 3 4 3 8s-3 6-6 4-1-6 1-8 2-2 2-4z" fill="#9cc8f8" />
          </svg>
          <span className="ml-[7px] text-[14.3px] text-black font-['Open_Sans',sans-serif] whitespace-pre">TradeStation 8.1 - SP500_NASDAQ - SP500_TF60 - [Chart Analysis - GS:S&amp;P500  60 min  [CME] S&amp;P500 FUT]</span>
        </div>
        <div className="relative flex mr-[3px] h-[25px] self-start border border-t-0 border-[#c8d4e0] rounded-b-[4px] overflow-hidden">
          <div className="w-[37px] bg-[#8a97a6]/70 border-r border-[#d0d8e0] flex items-end justify-center pb-[4px]"><div className="w-[16px] h-[4px] bg-white" /></div>
          <div className="w-[36px] bg-[#8a97a6]/70 border-r border-[#d0d8e0] flex items-center justify-center">
            <svg viewBox="0 0 18 18" className="w-[18px] h-[18px]" fill="none" stroke="#fff" strokeWidth="2"><path d="M6 4V2h10v10h-2" /><rect x="2" y="5" width="11" height="11" /><rect x="5" y="8" width="5" height="5" stroke="#3a4a5a" strokeWidth="1" /></svg>
          </div>
          <div className="w-[62px] bg-[linear-gradient(180deg,#c87868_0,#c46a56_50%,#c0412a_55%,#c25a40_100%)] flex items-center justify-center">
            <svg viewBox="0 0 18 18" className="w-[18px] h-[18px]" fill="none" stroke="#f4f4f4" strokeWidth="4"><path d="M2 2l14 14M16 2L2 16" /></svg>
          </div>
        </div>
      </div>

      {/* menu bar */}
      <div className="h-[29px] shrink-0 flex items-center justify-between bg-[linear-gradient(180deg,#ffffff_0,#f8f8fc_22%,#dde1f1_30%,#d7dcee_100%)] font-['Open_Sans',sans-serif] text-[14px] text-black">
        <div className="flex items-center">
          <svg viewBox="0 0 19 17" className="ml-[7px] w-[19px] h-[17px]">
            <rect width="19" height="17" fill="#101820" />
            <rect y="0" width="19" height="2" fill="#1c2f7a" />
            <rect y="14" width="19" height="3" fill="#701010" />
            <path d="M1 11l3-2 2 1 3-6 2 4 3-3 3 3" stroke="#20d040" fill="none" />
          </svg>
          <div className="flex ml-[9px]">
            <span className="w-[36px]">File</span><span className="w-[40px]">Edit</span><span className="w-[46px]">View</span><span className="w-[50px]">Insert</span><span className="w-[62px]">Format</span><span className="w-[69px]">Drawing</span><span className="w-[69px]">Window</span><span>Help</span>
          </div>
        </div>
        <div className="flex gap-[2px] self-end">
          <WinBtn kind="min" w="w-[22px]" />
          <WinBtn kind="max" w="w-[22px]" />
          <WinBtn kind="close" w="w-[24px]" />
        </div>
      </div>

      <Toolbar />

      {/* chart */}
      <div className="flex h-[902px] shrink-0 bg-[#020204]">
        <Chart />
        <Axis />
      </div>

      {/* time axis */}
      <div className="h-[28px] shrink-0 bg-[#020204] border-t border-white flex pl-[40px] text-white text-[20px] leading-[23px] overflow-hidden">
        <div className="w-[104px] shrink-0 flex">
          <div className="w-px h-[6px] bg-white" /><span className="ml-[5px] mt-[3px]">3/08</span>
        </div>
        {ticksLabels.map((t) => (
          <div key={t} className="w-[68px] shrink-0 flex">
            <div className="w-px h-[6px] bg-white" /><span className="ml-[5px] mt-[3px]">{t}</span>
          </div>
        ))}
        <div className="w-[68px] shrink-0 flex">
          <div className="w-px h-[6px] bg-white" /><span className="ml-[1px] mt-[3px]">18:00</span>
        </div>
      </div>

      {/* scrollbar */}
      <div className="h-[23px] shrink-0 bg-[#f0f0f0] flex items-center justify-between pl-[8px] pr-[11px]">
        <div className="w-0 h-0 border-t-[5px] border-b-[5px] border-r-[5px] border-t-transparent border-b-transparent border-r-[#555]" />
        <div className="flex items-center gap-[8px]">
          <div className="w-[18px] h-[18px] bg-[#dcdcdc] border border-[#a8a8a8] rounded-[2px] flex items-center justify-center gap-px">
            <div className="w-px h-[8px] bg-[#555]" /><div className="w-px h-[8px] bg-[#555]" /><div className="w-px h-[8px] bg-[#555]" />
          </div>
          <div className="w-0 h-0 border-t-[5px] border-b-[5px] border-l-[5px] border-t-transparent border-b-transparent border-l-[#555]" />
        </div>
      </div>

      {/* tabs */}
      <div className="h-[17px] shrink-0 flex border-t-2 border-black bg-[#f0f0f0] text-[12px] text-black leading-[15px]">
        <div className="w-[70px] flex items-start pl-[2px] shrink-0">
          {["M11 3L6 8l5 5zM5 3v10", "M11 3L6 8l5 5z", "M6 3l5 5-5 5z", "M6 3l5 5-5 5zM12 3v10"].map((d, i) => (
            <svg key={i} viewBox="0 0 16 16" className="w-[16px] h-[15px] border border-[#c8c8c8] bg-[#f4f4f4]">
              <path d={d} fill="#888" stroke="#888" strokeWidth="0.6" />
            </svg>
          ))}
        </div>
        {tabs.map(([t, w]) => {
          const on = t === "SP500_TF60";
          return (
            <div key={t} className={`relative ${w} h-[15px] shrink-0 flex items-center justify-center ${on ? "bg-white font-bold" : "bg-[#f8f8f8] border-b border-black"}`}>
              <div className="absolute left-0 top-0 h-full w-px bg-black -skew-x-[20deg]" />
              <div className="absolute right-0 top-0 h-full w-px bg-black skew-x-[20deg]" />
              <span className="whitespace-pre">{t}</span>
            </div>
          );
        })}
      </div>

      {/* status bar */}
      <div className="h-[20px] shrink-0 flex items-center justify-between border-t-2 border-[#c0c0c0] bg-[#f0f0f0] text-[14px] leading-[18px] text-black">
        <span className="pl-[2px]">For Help, press F1</span>
        <div className="flex h-full">
          {statusCells.map(([t, w, c]) => (
            <div key={t} className={`${w} ${c} border-l border-[#d8d8d8] pl-[4px] whitespace-pre`}>{t}</div>
          ))}
          <div className="w-[17px] border-l border-r border-[#d8d8d8] flex items-center justify-center">
            <div className="w-[9px] h-[10px] rounded-full bg-[radial-gradient(circle_at_40%_35%,#ff8080,#d00000_60%,#700000)]" />
          </div>
          <div className="w-[125px] pl-[6px] whitespace-pre">09/05/2022 14:20</div>
        </div>
      </div>
      <div className="h-[2px] shrink-0 bg-[#7f8f9f]" />
    </div>
  );
}
